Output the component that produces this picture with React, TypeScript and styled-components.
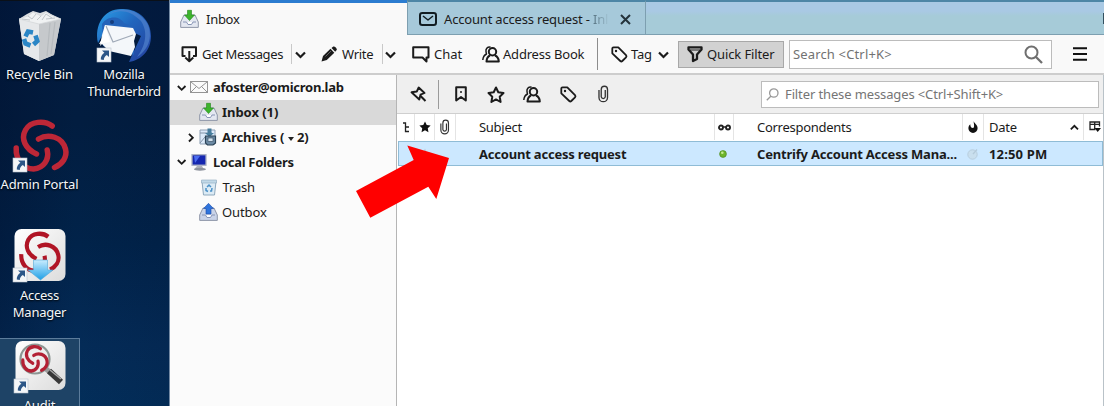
import React from "react";
import styled, { createGlobalStyle } from "styled-components";

const Global = createGlobalStyle`
  body { margin: 0; overflow: hidden; font-family: "Noto Sans", "Open Sans", sans-serif; font-size: 13px; color: #1b1b1b; }
  * { box-sizing: border-box; }
  svg { display: block; flex: none; overflow: visible; }
`;

const Screen = styled.div`
  position: relative; display: flex; width: 1104px; height: 406px; overflow: hidden;
`;

/* ---- desktop ---- */
const Desktop = styled.div`
  width: 169px; height: 406px; overflow: hidden; flex: none;
  display: grid; grid-template-columns: 79px 90px; grid-template-rows: 112px 110px 115px 110px;
  border-top: 1px solid #0a1018;
  background: linear-gradient(90deg, rgba(0,12,40,.3) 0%, rgba(0,20,60,0) 45%, rgba(0,12,40,.1) 100%),
    linear-gradient(180deg, #021b40 0%, #021d40 30%, #01234a 60%, #042b57 85%, #032e5a 100%);
`;
const Shortcut = styled.div<{ $selected?: boolean; $top: number }>`
  display: flex; flex-direction: column; align-items: center; padding-top: ${p => p.$top}px;
  color: #f4f7fb; text-align: center; text-shadow: 0 1px 2px #000;
  ${p => p.$selected && "width: 80px; background: #1e4366; border: 1px solid #5c7c9b; border-left: 0;"}
`;
const Caption = styled.div<{ $ls?: number; $gap: number }>`
  font-size: 13px; line-height: 17px; white-space: nowrap; margin-top: ${p => p.$gap}px;
  letter-spacing: ${p => p.$ls ?? -0.15}px;
`;

/* ---- window ---- */
const Window = styled.div`
  width: 935px; height: 406px; display: flex; flex-direction: column;
  border-left: 1px solid #7389a3; background: #fff;
`;
const TabStrip = styled.div`
  display: flex; height: 35px; flex: none; background: #a7cad9;
`;
const ActiveTab = styled.div`
  width: 237px; display: flex; align-items: center; gap: 7px; padding: 0 0 0 10px;
  border-top: 3px solid #2b7cd0; background: #f9f9f9;
`;
const MessageTab = styled.div`
  width: 239px; display: flex; align-items: center; padding: 2px 0 0 11px;
  border: 1px solid #7d9fb0; border-top: 2px solid #4d86a6; background: #a6c9da;
`;
const TabRest = styled.div`
  flex: 1; border-top: 2px solid #4d86a6; border-bottom: 1px solid #7d9fb0;
  background: linear-gradient(#a9c9e4 0 9px, #a6cbd8 14px);
  display: flex; justify-content: flex-end; align-items: center;
`;
const EdgeMark = styled.div`width: 1px; height: 11px; background: #33505f;`;
const Fade = styled.span`
  background: linear-gradient(90deg, #54707e, #a0c2d2); background-clip: text; -webkit-background-clip: text; color: transparent;
`;
const Toolbar = styled.div`
  display: flex; align-items: center; height: 40px; flex: none; padding-left: 11px; background: #f9f9f9;
  border-bottom: 2px solid #cdcdcd;
`;
const Slot = styled.div<{ $w: number; $pl?: number }>`
  width: ${p => p.$w}px; padding-left: ${p => p.$pl ?? 0}px; flex: none; display: flex; align-items: center;
`;
const Label = styled.div<{ $w?: number; $ls?: number; $bold?: boolean; $color?: string }>`
  width: ${p => (p.$w ? `${p.$w}px` : "auto")}; flex: none; white-space: nowrap; line-height: 18px;
  letter-spacing: ${p => p.$ls ?? (p.$bold ? -0.2 : -0.28)}px; font-weight: ${p => (p.$bold ? 700 : 400)};
  color: ${p => p.$color ?? "#1b1b1b"};
`;
const Rule = styled.div<{ $h: number; $c?: string }>`
  width: 1px; height: ${p => p.$h}px; flex: none; background: ${p => p.$c ?? "#c9c9c9"};
`;
const FilterButton = styled.div`
  width: 106px; height: 27px; display: flex; align-items: center; padding-left: 8px; flex: none;
  border: 1px solid #a8a8a8; background: #d2d2d2;
`;
const SearchBox = styled.div<{ $w: number; $h: number; $pl: number }>`
  width: ${p => p.$w}px; height: ${p => p.$h}px; flex: none; display: flex; align-items: center;
  padding-left: ${p => p.$pl}px; background: #fff; border: 1px solid #bcbcbc;
`;
const Body = styled.div`display: flex; flex: 1; min-height: 0;`;
const Sidebar = styled.div`width: 226px; flex: none; background: #fbfbfb;`;
const Folder = styled.div<{ $indent: number; $selected?: boolean }>`
  height: 24.9px; display: flex; align-items: center;
  padding-left: ${p => p.$indent}px; background: ${p => (p.$selected ? "#d9d9d9" : "transparent")};
`;
const CountMark = styled.svg`&& { display: inline-block; vertical-align: middle; }`;
const Main = styled.div`flex: 1; min-width: 0; border-left: 1px solid #b5b5b5; border-right: 1px solid #b9c2c8;`;
const QuickBar = styled.div`
  height: 39px; display: flex; align-items: center; padding-left: 13px;
  background: #efefef; border-bottom: 1px solid #cfcfcf;
`;
const Header = styled.div`
  height: 27px; display: grid; grid-template-columns: 18px 20px 21px 259px 19px 229px 21px 100px 1fr;
`;
const Column = styled.div<{ $pl?: number; $last?: boolean }>`
  display: flex; align-items: center; padding-left: ${p => p.$pl ?? 0}px; height: 26px;
  border-right: ${p => (p.$last ? "0" : "1px solid #e4e4e4")};
`;
const MessageRow = styled.div`
  height: 25px; margin-left: 1px; display: grid; grid-template-columns: 16px 20px 21px 259px 19px 229px 21px 1fr;
  align-items: center; background: #cce8ff; border: 1px solid #8fbcd6;
`;
const Cell = styled.div<{ $pl?: number }>`display: flex; align-items: center; padding-left: ${p => p.$pl ?? 0}px;`;
const Pointer = styled.svg`position: absolute; left: 0; top: 0; pointer-events: none;`;

/* ---- icons ---- */
const line = { fill: "none", stroke: "#1b1b1b", strokeWidth: 2, strokeLinejoin: "round" as const };

const Chevron = ({ dir = "down", s = 1 }: { dir?: "down" | "right" | "up"; s?: number }) => {
  const d = { down: "M1 3.5 5.5 8 10 3.5", right: "M3.5 1 8 5.5 3.5 10", up: "M1 8 5.5 3.5 10 8" }[dir];
  return <svg width={11 * s} height={11 * s} viewBox="0 0 11 11"><path d={d} fill="none" stroke="#1b1b1b" strokeWidth="2.2" /></svg>;
};
const ShortcutMark = ({ x, y }: { x: number; y: number }) => (
  <g transform={`translate(${x} ${y})`}>
    <rect width="14" height="14" fill="#f4f6f8" stroke="#b9c4ce" strokeWidth=".6" />
    <path d="M5 2.500H12V9L9.800 7C7.800 8.400 6.800 10 6.800 12L3.800 11.500C3.600 8.700 5 6.400 7.400 4.800Z" fill="#2c5687" />
  </g>
);
const RecycleBin = () => (
  <svg width="46" height="52" viewBox="0 0 46 52">
    <path d="M2 9 10 4 16 1 23 3 29 1 34 4 44 9 37 45 22 51 7 44Z" fill="#dcdfe1" />
    <path d="M2 9 22 14 22 51 7 44Z" fill="#e6e8ea" />
    <path d="M22 14 44 9 37 45 22 51Z" fill="#c6c9cc" />
    <path d="M2 9 22 14 44 9 34 5 29 2 24 6 16 2 11 6Z" fill="#f0f2f3" stroke="#d3d6d9" strokeWidth=".7" />
    <path d="M11 6 15 9 19 4M25 10 29 4 35 8M5 9 13 10M20 10 24 6M29 9 38 8" stroke="#c0c5c9" strokeWidth="1" fill="none" />
    <path d="M33 13 30 46M38 12 34 44" stroke="#b6babe" strokeWidth="1.2" />
    <g fill="none" stroke="#2b86c6" strokeWidth="4.6">
      <path d="M8.500 26.500 11 21.500 16 22.500" /><path d="M18.500 25.500 20.300 31 16.500 34.500" /><path d="M13.500 35.500 8.500 33.500 7 29" />
    </g>
  </svg>
);
const Thunderbird = () => (
  <svg width="58" height="56" viewBox="0 0 58 56">
    <defs><linearGradient id="bird" x1="0" x2="1" y1="0" y2="1"><stop offset="0" stopColor="#2aa0e8" /><stop offset=".45" stopColor="#2165bd" /><stop offset="1" stopColor="#253f9c" /></linearGradient></defs>
    <path d="M3 35C-1 17 9 1 26 1C43 0 56 12 56 28C56 42 47 52 34 54L38 45 46 28 12 12 8 26Z" fill="url(#bird)" />
    <path d="M13 7C24 0 36 3 45 12C52 20 53 35 42 49C55 41 58 26 52 15C43 1 26-3 13 7Z" fill="#5585d0" opacity=".65" />
    <path d="M7 16C13 7 25 8 29 15L39 19 39 47 8 38Z" fill="#2463b9" />
    <path d="M10 17 38 20 41 26 39 33 40 39 36 48 14 43 7 36 5 38 7 27Z" fill="#f4f7fa" />
    <path d="M11 18 18 34 38 27" fill="none" stroke="#a0aab8" strokeWidth="1.2" />
    <path d="M10 17 8 29 4 36 15 34Z" fill="#fff" />
    <circle cx="17" cy="14" r="2" fill="#153d7d" />
    <ShortcutMark x={2} y={40} />
  </svg>
);
const Knot = ({ color, w, cap = "round" }: { color: string; w: number; cap?: "round" | "butt" }) => (
  <g fill="none" stroke={color} strokeWidth={w} strokeLinecap={cap}>
    <path d="M39.700 6C32 0 18 1 13 10C8 19 13 29 24 34" />
    <path d="M26 19C36 13 50 17 53 29C55 37 50 44 42 47.500" />
    <path d="M3.700 28C3 40 11 49 21 49C31 48 37 40 34.700 30" />
  </g>
);
const AdminPortal = () => (
  <svg width="58" height="54" viewBox="0 0 58 54"><g transform="translate(1.500 0)"><Knot color="#bd2737" w={5.5} /></g><ShortcutMark x={2} y={38} /></svg>
);
const AccessManager = () => (
  <svg width="54" height="53" viewBox="0 0 54 53">
    <defs>
      <linearGradient id="tile" x2="1" y2="1"><stop stopColor="#fff" /><stop offset="1" stopColor="#dcdcdc" /></linearGradient>
      <linearGradient id="dn" x2="0" y2="1"><stop stopColor="#c9edff" /><stop offset="1" stopColor="#1d9fe6" /></linearGradient>
    </defs>
    <rect x="1.500" y="0" width="51" height="52" rx="7" fill="url(#tile)" />
    <g transform="translate(5.500 3) scale(.75 .79)"><Knot color="#b01425" w={5.5} cap="butt" /></g>
    <path d="M20.500 31H34.500V41H40L27.500 51 15 41H20.500Z" fill="url(#dn)" stroke="#54a9d6" strokeWidth=".6" />
    <ShortcutMark x={0} y={39} />
  </svg>
);
const Audit = () => (
  <svg width="52" height="53" viewBox="0 0 52 53">
    <rect x="1.500" y="0" width="50" height="49" rx="7" fill="url(#tile)" />
    <path d="M31 27 45 39" stroke="#9b9b9b" strokeWidth="5" /><path d="M35 30 47 41" stroke="#383838" strokeWidth="6" /><path d="M36 29 47 38" stroke="#a9a9a9" strokeWidth="1.500" />
    <circle cx="21" cy="18" r="14.500" fill="#eee" stroke="#8c9693" strokeWidth="2.200" />
    <g transform="translate(7 4.500) scale(.49 .52)"><Knot color="#b32034" w={6.5} /></g>
    <ShortcutMark x={0} y={38} />
  </svg>
);
const InboxIcon = ({ up }: { up?: boolean }) => (
  <svg width="19" height="18" viewBox="0 0 19 18">
    <path d="M4 5H15L18.300 12V17.400H.7V12Z" fill={up ? "#c9d3e8" : "#e3e7f0"} stroke="#8e96a8" />
    <path d="M3 12H6.500L8 14.500H11.500L13 12H16" fill="#fff" stroke="#8794b5" />
    {up
      ? <path d="M9.500.3 14.500 5.500H12V11H7V5.500H4.500Z" fill="#2f74dc" stroke="#1c4ca8" strokeWidth=".6" />
      : <path d="M7.500.3H11.500V5H14.500L9.500 10.500 4.500 5H7.500Z" fill="#3db42c" stroke="#24861c" strokeWidth=".6" />}
  </svg>
);
const ArchiveIcon = () => (
  <svg width="18" height="18" viewBox="0 0 18 18">
    <path d="M1 2H16V16H1Z" fill="#dceafa" stroke="#8fa0b4" /><path d="M1 5H13M1 15 6 9" stroke="#8293a7" />
    <path d="M8.500.5H12.500V5H15L10.500 9 6 5H8.500Z" fill="#477d9d" />
    <path d="M6.500 8H16.500V15L14 17H8.500L6.500 15Z" fill="#6d8ba5" stroke="#2d4457" strokeWidth="1.200" /><rect x="9" y="10" width="5" height="3.500" fill="#d3e3ef" stroke="#2d4457" strokeWidth=".6" />
  </svg>
);
const MonitorIcon = () => (
  <svg width="17" height="17" viewBox="0 0 17 17">
    <rect x="1" y=".7" width="14" height="10.500" fill="#1527b0" stroke="#a9b0c4" strokeWidth="1.300" />
    <path d="M3 2H9L4 9Z" fill="#4a6cf0" /><path d="M6 12H11L13 15.500H3Z" fill="#aeb2ba" /><ellipse cx="9" cy="15.300" rx="6" ry="1.500" fill="#8e939e" />
  </svg>
);
const TrashIcon = () => (
  <svg width="16" height="17" viewBox="0 0 16 17">
    <path d="M1 2.500H15L13.500 16H2.500Z" fill="#dcebf5" stroke="#8fa9bd" /><path d="M.5 1H15.500V4H.5Z" fill="#c1d9e8" stroke="#8fa9bd" strokeWidth=".6" />
    <path d="M6 8 8 6 10 8M11 9 10.500 12H9M7 12.500 5 11.500 5 9" fill="none" stroke="#4c92c8" strokeWidth="1.500" />
  </svg>
);
const MailOutline = () => (
  <svg width="18" height="12" viewBox="0 0 18 12"><rect x=".5" y=".5" width="17" height="11" fill="#fafafa" stroke="#949494" /><path d="M1 1 9 7.500 17 1M1 11 6.500 5.500M17 11 11.500 5.500" fill="none" stroke="#949494" /></svg>
);
const EnvelopeBold = () => (
  <svg width="18" height="14" viewBox="0 0 18 14"><rect x="1" y="1" width="16" height="12" rx="2.300" {...line} stroke="#111c22" /><path d="M4 4 9 8 14 4" {...line} stroke="#111c22" strokeWidth="1.500" /></svg>
);
const CloseIcon = () => (<svg width="11" height="11" viewBox="0 0 11 11"><path d="M1 1 10 10M10 1 1 10" stroke="#24333b" strokeWidth="2" /></svg>);
const GetIcon = () => (
  <svg width="17" height="16" viewBox="0 0 17 16"><path d="M4.500 10H1.500V1.200H15V10H12" {...line} /><path d="M8.300 5V15M4.300 11.500 8.300 15.200 12.300 11.500" {...line} /></svg>
);
const PencilIcon = () => (
  <svg width="17" height="16" viewBox="0 0 17 16"><path d="M.5 15.500 2 10 9.500 2.800 13.300 6.700 5.800 14Z" fill="#1b1b1b" /><path d="M10.500 2 12.300.5C13.500-.2 16.500 2.500 15.700 4L14.200 5.800Z" fill="#1b1b1b" /><path d="M4.500 10.500 10 5" stroke="#777" strokeWidth=".8" /></svg>
);
const ChatIcon = () => (<svg width="18" height="17" viewBox="0 0 18 17"><path d="M1.200 1.200H16.500V11.500H14.500V15.500L10.500 11.500H1.200Z" {...line} /></svg>);
const PersonIcon = () => (
  <svg width="18" height="17" viewBox="0 0 18 17">
    <circle cx="10.500" cy="5.800" r="3.700" {...line} /><path d="M8 9.500C5.700 10.500 4.700 12.500 4.500 15.500H16.800C16.700 12.500 15.300 10.500 13 9.500" {...line} />
    <path d="M8.500 1C5 .7 3.600 3 4 5.500C4.200 7 4.500 8 4.500 8C2.500 9 1 11.500.8 14" {...line} strokeWidth={1.5} />
  </svg>
);
const TagIcon = () => (
  <svg width="17" height="17" viewBox="0 0 17 17"><path d="M1.300 2.500Q1.300 1.300 2.500 1.300H7.300L15 9.200Q16 10.300 15 11.300L11.300 15Q10.300 16 9.300 15L1.300 7.300Z" {...line} strokeWidth={1.8} /><circle cx="5" cy="5" r="1.200" fill="#1b1b1b" /></svg>
);
const FunnelIcon = () => (<svg width="16" height="16" viewBox="0 0 16 16"><path d="M1.500 1.300H14.500V3.500L10 8.500V13L6 15V8.500L1.500 3.500Z" {...line} strokeWidth={2.3} /><path d="M3 4H13" stroke="#1b1b1b" strokeWidth="1" /></svg>);
const MagnifierIcon = () => (<svg width="19" height="19" viewBox="0 0 19 19"><circle cx="7.500" cy="7.500" r="6" fill="none" stroke="#6f6f6f" strokeWidth="2" /><path d="M12 12 18 18" stroke="#6f6f6f" strokeWidth="2.300" /></svg>);
const SmallMagnifier = () => (<svg width="13" height="13" viewBox="0 0 13 13"><circle cx="7.800" cy="5" r="4.200" fill="none" stroke="#999" strokeWidth="1.300" /><path d="M5 8 .8 12.300" stroke="#999" strokeWidth="1.300" /></svg>);
const MenuIcon = () => (<svg width="14" height="14" viewBox="0 0 14 14"><path d="M0 1.200H14M0 7H14M0 12.800H14" stroke="#111" strokeWidth="2" /></svg>);
const PinIcon = () => (
  <svg width="17" height="17" viewBox="0 0 17 17"><path d="M8.700 1.500 14.500 7 10.500 8.700 9.300 13.500 1.500 6.300 6.800 5.500Z" {...line} strokeWidth={1.9} /><path d="M10.300 9.800 15.500 15" {...line} /></svg>
);
const BookmarkIcon = () => (<svg width="12" height="16" viewBox="0 0 12 16"><path d="M1.200 1.200H10.800V14.500L6 11 1.200 14.500Z" {...line} /><circle cx="6" cy="6" r="1" fill="#1b1b1b" /></svg>);
const starPath = "M9 1.500 11.300 6.300 16.500 7 12.700 10.700 13.600 16 9 13.400 4.400 16 5.300 10.700 1.500 7 6.700 6.300Z";
const StarIcon = () => (<svg width="18" height="17" viewBox="0 0 18 17"><path d={starPath} {...line} /></svg>);
const StarSolid = ({ c = "#111" }: { c?: string }) => (<svg width="12" height="12" viewBox="1 1 16 16"><path d={starPath} fill={c} /></svg>);
const ClipIcon = ({ h = 18 }: { h?: number }) => (
  <svg width={h * 0.6} height={h} viewBox="0 0 11 18"><path d="M1 5V12.500A4.300 4.300 0 0 0 9.700 12.500V4.300A3.200 3.200 0 0 0 3.300 4.300V12A2.100 2.100 0 0 0 7.400 12V5" fill="none" stroke="#333" strokeWidth="1.350" /></svg>
);
const ThreadIcon = () => (<svg width="7" height="11" viewBox="0 0 7 11"><path d="M0 1H2.500V9.500H6M2.500 5H6" fill="none" stroke="#222" strokeWidth="1.300" /></svg>);
const GlassesIcon = () => (<svg width="13" height="7" viewBox="0 0 13 7"><circle cx="3" cy="3.500" r="2" fill="none" stroke="#222" strokeWidth="1.900" /><circle cx="10" cy="3.500" r="2" fill="none" stroke="#222" strokeWidth="1.900" /><path d="M5 3H8" stroke="#222" strokeWidth="1.500" /></svg>);
const FlameIcon = () => (<svg width="10" height="12" viewBox="0 0 10 12"><path d="M5.500 0C6 2 9.800 4 9.600 7.300A4.600 4.600 0 0 1 .4 7.300C.4 5.500 1.300 4 2.300 3.300C2.300 5.500 3 7 5 7C6.800 6.500 6 3.500 5.500 0Z" fill="#111" /></svg>);
const PickerIcon = () => (<svg width="12" height="12" viewBox="0 0 12 12"><path d="M6.500 8.500H1V1H10.500V5.500M1 3.300H10.500M5.700 1V8.500" fill="none" stroke="#222" strokeWidth="1.300" /><path d="M5.500 7H12L8.700 11Z" fill="#111" /></svg>);
const JunkIcon = () => (<svg width="12" height="12" viewBox="0 0 12 12"><circle cx="5.500" cy="6.500" r="4.700" fill="#c9dfee" stroke="#b8cede" /><path d="M6 6 10 1.500" stroke="#b4cada" strokeWidth="1.300" /></svg>);

export default function App() {
  return (
    <>
      <Global />
      <Screen>
        <Desktop>
          <Shortcut $top={9}><RecycleBin /><Caption $gap={4}>Recycle Bin</Caption></Shortcut>
          <Shortcut $top={7}><Thunderbird /><Caption $gap={2} $ls={-0.25}>Mozilla<br />Thunderbird</Caption></Shortcut>
          <Shortcut $top={7}><AdminPortal /><Caption $gap={2}>Admin Portal</Caption></Shortcut><div />
          <Shortcut $top={6}><AccessManager /><Caption $gap={5} $ls={-0.25}>Access<br />Manager</Caption></Shortcut><div />
          <Shortcut $top={2} $selected><Audit /><Caption $gap={3}>Audit</Caption></Shortcut>
        </Desktop>
        <Window>
          <TabStrip>
            <ActiveTab><InboxIcon /><Label>Inbox</Label></ActiveTab>
            <MessageTab>
              <Slot $w={25}><EnvelopeBold /></Slot>
              <Label $w={176} $ls={-0.18}>Account access request - <Fade>Inl</Fade></Label>
              <CloseIcon />
            </MessageTab>
            <TabRest><EdgeMark /></TabRest>
          </TabStrip>
          <Toolbar>
            <Slot $w={21}><GetIcon /></Slot><Label $w={89} $ls={-0.35}>Get Messages</Label><Rule $h={20} />
            <Slot $w={29} $pl={3}><Chevron /></Slot>
            <Slot $w={21}><PencilIcon /></Slot><Label $w={40}>Write</Label><Rule $h={20} />
            <Slot $w={29} $pl={2}><Chevron /></Slot>
            <Slot $w={22}><ChatIcon /></Slot><Label $w={48} $ls={-0.05}>Chat</Label>
            <Slot $w={21}><PersonIcon /></Slot><Label $w={94} $ls={-0.2}>Address Book</Label><Rule $h={32} $c="#8d8d8d" />
            <Slot $w={33} $pl={13}><TagIcon /></Slot><Label $w={27}>Tag</Label><Slot $w={20}><Chevron /></Slot>
            <FilterButton><Slot $w={20}><FunnelIcon /></Slot><Label $ls={-0.12}>Quick Filter</Label></FilterButton>
            <Slot $w={5} />
            <SearchBox $w={263} $h={29} $pl={3}><Label $w={231} $ls={0.15} $color="#727272">Search &lt;Ctrl+K&gt;</Label><MagnifierIcon /></SearchBox>
            <Slot $w={21} /><MenuIcon />
          </Toolbar>
          <Body>
            <Sidebar>
              <Folder $indent={7}><Slot $w={13}><Chevron s={0.85} /></Slot><Slot $w={23}><MailOutline /></Slot><Label $bold $ls={-0.25}>afoster@omicron.lab</Label></Folder>
              <Folder $indent={29} $selected><Slot $w={23}><InboxIcon /></Slot><Label $bold $ls={-0.05}>Inbox (1)</Label></Folder>
              <Folder $indent={16}><Slot $w={13}><Chevron dir="right" s={0.85} /></Slot><Slot $w={23}><ArchiveIcon /></Slot><Label $bold $ls={-0.08}>Archives ( <CountMark width="6" height="4"><path d="M0 0H6L3 4Z" fill="#222" /></CountMark> 2)</Label></Folder>
              <Folder $indent={7}><Slot $w={14}><Chevron s={0.85} /></Slot><Slot $w={22}><MonitorIcon /></Slot><Label $bold $ls={-0.3}>Local Folders</Label></Folder>
              <Folder $indent={31}><Slot $w={21.5}><TrashIcon /></Slot><Label $ls={-0.15}>Trash</Label></Folder>
              <Folder $indent={29}><Slot $w={23}><InboxIcon up /></Slot><Label $ls={-0.1}>Outbox</Label></Folder>
            </Sidebar>
            <Main>
              <QuickBar>
                <Slot $w={28}><PinIcon /></Slot><Slot $w={17}><Rule $h={29} $c="#9a9a9a" /></Slot>
                <Slot $w={32}><BookmarkIcon /></Slot><Slot $w={36}><StarIcon /></Slot>
                <Slot $w={37}><PersonIcon /></Slot><Slot $w={38}><TagIcon /></Slot><Slot $w={163}><ClipIcon /></Slot>
                <SearchBox $w={338} $h={27} $pl={4}><Slot $w={19}><SmallMagnifier /></Slot><Label $ls={-0.12} $color="#757575">Filter these messages &lt;Ctrl+Shift+K&gt;</Label></SearchBox>
              </QuickBar>
              <Header>
                <Column $pl={6}><ThreadIcon /></Column>
                <Column $pl={4}><StarSolid /></Column>
                <Column $pl={5}><ClipIcon h={16} /></Column>
                <Column $pl={23}><Label>Subject</Label></Column>
                <Column $pl={3}><GlassesIcon /></Column>
                <Column $pl={23}><Label>Correspondents</Label></Column>
                <Column $pl={5}><FlameIcon /></Column>
                <Column $pl={5}><Label $w={81}>Date</Label><Chevron dir="up" s={0.8} /></Column>
                <Column $pl={5} $last><PickerIcon /></Column>
              </Header>
              <MessageRow>
                <Cell /><Cell $pl={4}><StarSolid c="#b9cddd" /></Cell><Cell />
                <Cell $pl={23}><Label $bold>Account access request</Label></Cell>
                <Cell $pl={4}><svg width="8" height="8" viewBox="0 0 8 8"><circle cx="4" cy="4" r="3.400" fill="#6eb52b" stroke="#4d8a20" strokeWidth=".7" /><circle cx="3.300" cy="2.800" r="1.300" fill="#c5ea92" /></svg></Cell>
                <Cell $pl={23}><Label $bold>Centrify Account Access Mana...</Label></Cell>
                <Cell $pl={4}><JunkIcon /></Cell>
                <Cell $pl={5}><Label $bold $ls={0.15}>12:50 PM</Label></Cell>
              </MessageRow>
            </Main>
          </Body>
        </Window>
        <Pointer width="1104" height="406" viewBox="0 0 1104 406">
          <path d="M356 191 413.700 160 407.300 145.500 449 158 436.300 199 428.300 186.700 370.300 217.700Z" fill="#f00" />
        </Pointer>
      </Screen>
    </>
  );
}
